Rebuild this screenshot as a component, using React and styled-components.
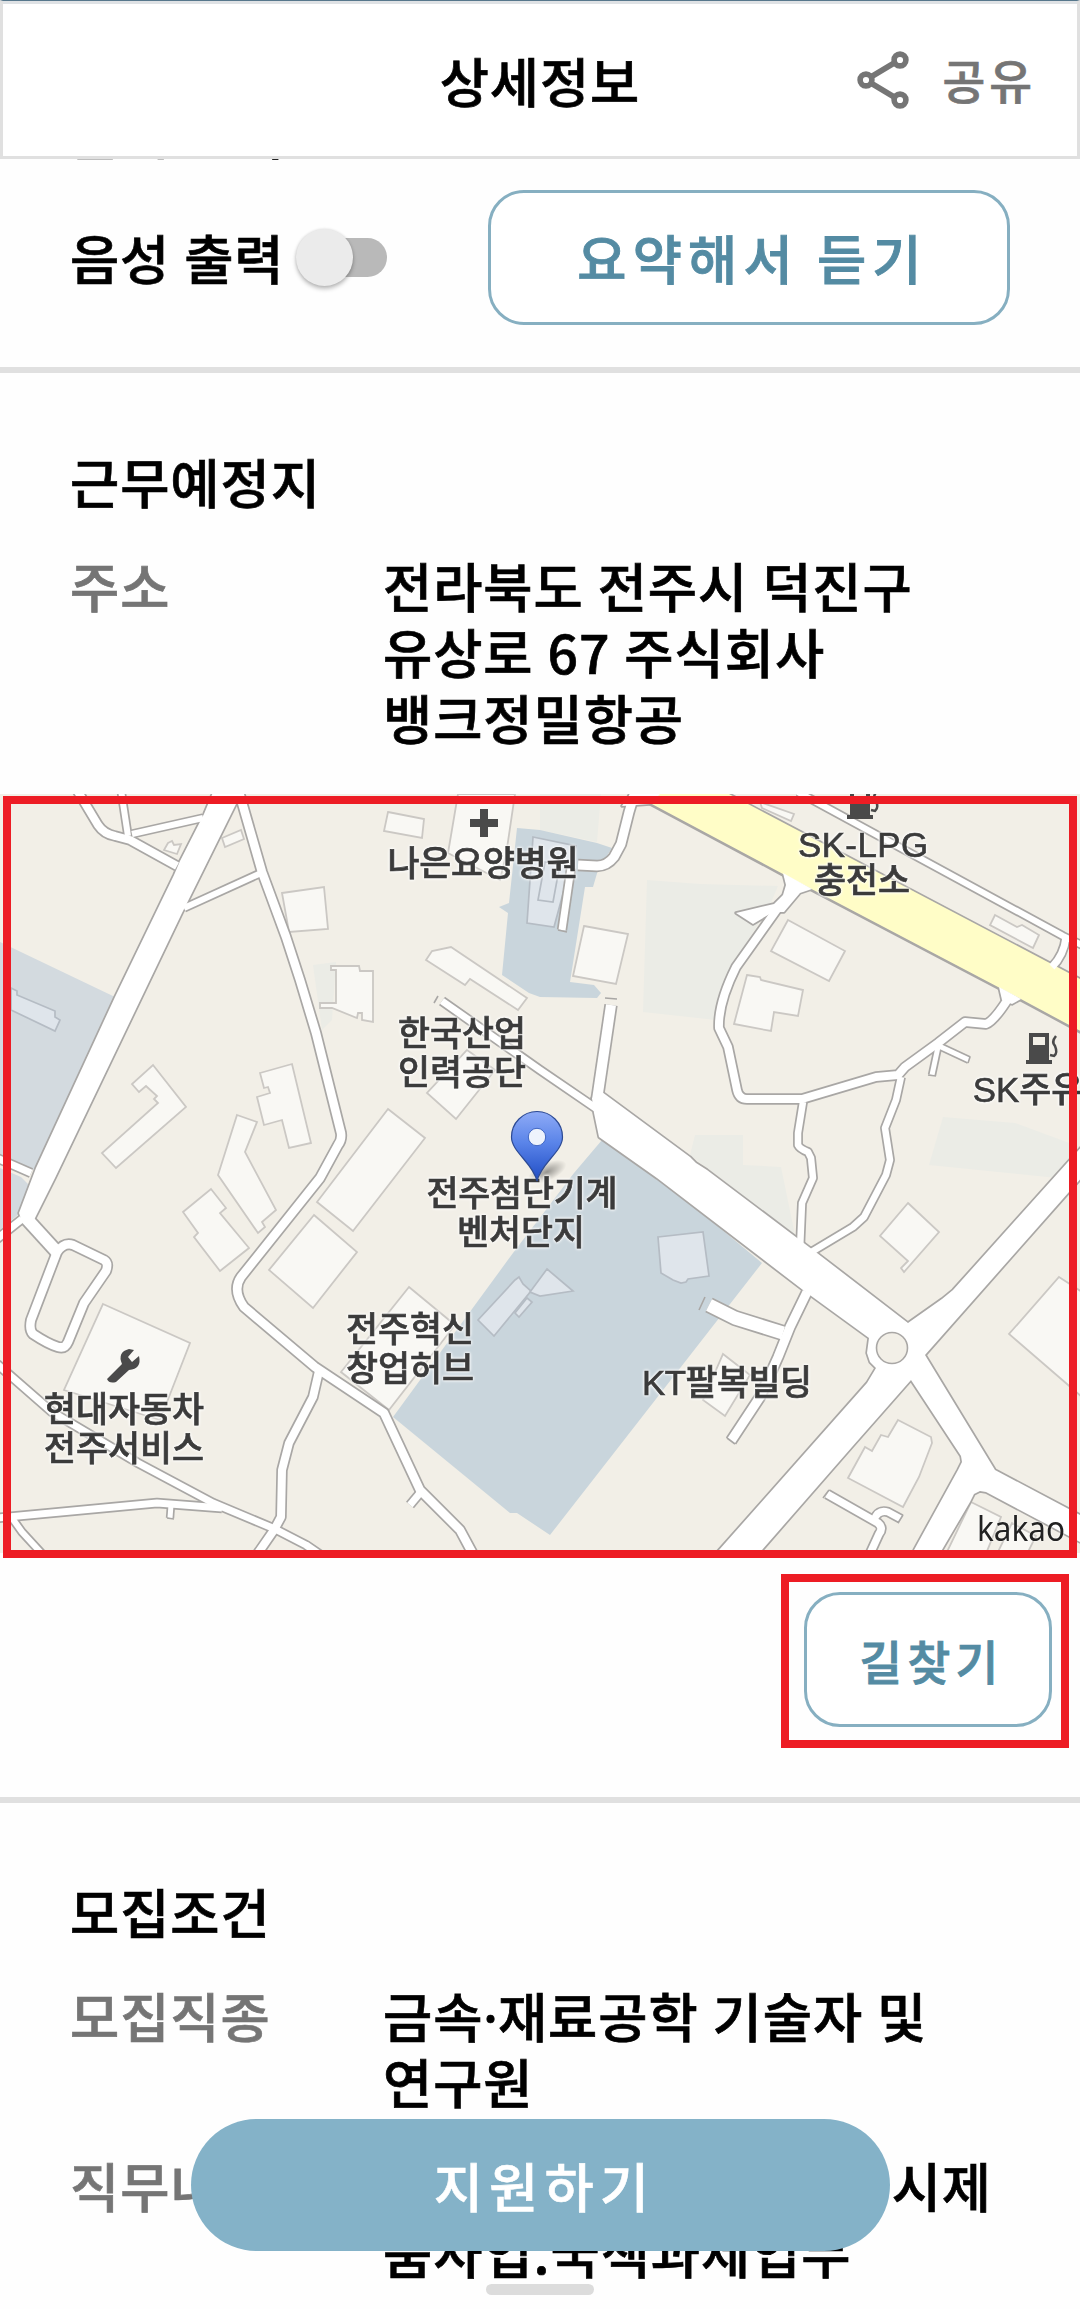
import React from "react";
import styled, { createGlobalStyle } from "styled-components";

const GlobalStyle = createGlobalStyle`
  * { box-sizing: border-box; }
  body {
    margin: 0;
    background: #fefefe;
    font-family: "Noto Sans CJK KR", "Noto Sans", sans-serif;
    font-weight: 500;
    color: #000;
    -webkit-text-stroke: 0.7px currentColor;
  }
  button { font-family: inherit; }
`;

const Page = styled.div`
  position: relative;
  width: 1080px;
  height: 2309px;
  overflow: hidden;
  background: #fefefe;
`;

const Header = styled.header`
  position: relative;
  z-index: 2;
  display: grid;
  grid-template-columns: 1fr auto 1fr;
  align-items: center;
  height: 159px;
  padding: 0 41px 0 41px;
  background: #fff;
  border: 3px solid #e0e0e0;
  border-top: 1px solid #57778c;
  box-shadow: inset 0 3px 0 #dfe2e5;
`;

const Title = styled.h1`
  grid-column: 2;
  margin: 2px 0 0;
  font-size: 53.5px;
  letter-spacing: 0.9px;
  line-height: 66px;
  font-weight: 500;
`;

const Share = styled.button`
  justify-self: end;
  display: flex;
  align-items: center;
  gap: 32px;
  margin-top: 2px;
  padding: 0;
  border: 0;
  background: none;
  color: #757575;
  font-size: 46.5px;
  line-height: 60px;
  letter-spacing: 4px;
  font-weight: 500;
`;

const ShareLabel = styled.span`
  margin-top: -1px;
`;

const Peek = styled.div`
  height: 66px;
  margin: -60px 0 -6px;
  padding-left: 70px;
  font-size: 53.5px;
  letter-spacing: 0.9px;
  word-spacing: 2px;
  line-height: 66px;
`;

const VoiceRow = styled.div`
  display: flex;
  align-items: center;
  height: 208px;
  padding: 0 70px;
`;

const VoiceLabel = styled.span`
  width: 214px;
  margin-top: -12px;
  font-size: 53.5px;
  letter-spacing: 0.9px;
  word-spacing: 1px;
  line-height: 66px;
  white-space: nowrap;
`;

const Track = styled.div`
  display: flex;
  align-items: center;
  width: 89px;
  height: 39px;
  margin: -12px 0 0 14px;
  border-radius: 20px;
  background: #b9b9b9;
`;

const Thumb = styled.div`
  flex: none;
  width: 57px;
  height: 57px;
  margin-left: -2px;
  border-radius: 50%;
  background: #ebebeb;
  box-shadow: 0 3px 4px rgba(0, 0, 0, 0.25), 0 0 3px rgba(0, 0, 0, 0.12);
`;

const OutlineButton = styled.button`
  width: ${(p) => p.$width}px;
  height: 135px;
  margin: ${(p) => p.$margin || 0};
  padding: 0 0 1px 7px;
  border: 3px solid #86afc1;
  border-radius: 36px;
  background: #fff;
  color: #548ba3;
  font-size: ${(p) => p.$size}px;
  letter-spacing: 0.115em;
  font-weight: 500;
  -webkit-text-stroke: 0.9px currentColor;
`;

const Divider = styled.div`
  height: 6px;
  background: #e0e0e0;
`;

const Section = styled.section`
  display: flex;
  flex-direction: column;
  gap: 38px;
  padding: 75px 70px 0;
  font-size: 53.5px;
  letter-spacing: 0.95px;
  line-height: 66px;
`;

const SectionTitle = styled.h2`
  margin: 0;
  font-size: inherit;
  font-weight: 500;
`;

const Row = styled.div`
  display: grid;
  grid-template-columns: 313px 1fr;
`;

const Label = styled.div`
  color: #757575;
  white-space: nowrap;
`;

const Value = styled.div`
  word-spacing: ${(p) => p.$wordSpacing || 0}px;
  white-space: nowrap;
`;

const MiddleDot = styled.span`
  font-family: "Noto Sans", sans-serif;
  letter-spacing: 0;
  line-height: 0;
`;

const MapBox = styled.div`
  position: relative;
  height: 759px;
  margin-top: 44px;
`;

const MapSvg = styled.svg`
  display: block;
  width: 1080px;
  height: 759px;
`;

const MapFrame = styled.div`
  position: absolute;
  inset: 2px 3px -5px 3px;
  border: 8px solid #ed1c24;
`;

const Actions = styled.div`
  display: flex;
  justify-content: flex-end;
  height: 244px;
  padding: 21px 11px 0 0;
`;

const ActionFrame = styled.div`
  height: 174px;
  padding: 10px 9px 13px 15px;
  border: 8px solid #ed1c24;
`;

const ApplyButton = styled.button`
  position: absolute;
  left: 191px;
  top: 2119px;
  width: 699px;
  height: 132px;
  padding: 0 0 1px 8px;
  border: 0;
  border-radius: 66px;
  background: #84b2c8;
  color: #fff;
  font-size: 53.5px;
  letter-spacing: 0.115em;
  font-weight: 500;
  -webkit-text-stroke: 0.6px currentColor;
`;

const HomeHandle = styled.div`
  position: absolute;
  left: 486px;
  top: 2284px;
  width: 108px;
  height: 11px;
  border-radius: 6px;
  background: #dcdcdc;
`;

const Place = styled.text`
  font-family: "Liberation Sans", "Noto Sans CJK KR", sans-serif;
  font-size: 34.8px;
  font-weight: 500;
  text-anchor: middle;
  fill: #3b3b3b;
  stroke: #3b3b3b;
  stroke-width: 0.7px;
  -webkit-text-stroke: 0;
  filter: drop-shadow(0 0 1px #fff) drop-shadow(0 0 1.5px #fff);
`;

const Brand = styled.text`
  font-family: "Noto Sans", sans-serif;
  font-weight: 400;
  font-size: 35px;
  fill: #222;
  -webkit-text-stroke: 0;
  filter: drop-shadow(0 0 1px #fff);
`;

const ShareIcon = () => (
  <svg width="54" height="58" viewBox="0 0 54 58" fill="none" stroke="#757575" strokeWidth="5.6">
    <path d="M14 26.5 L39 11.5 M14 31.5 L39 46.5" />
    <circle cx="10" cy="29" r="5.9" />
    <circle cx="44" cy="9" r="5.9" />
    <circle cx="44" cy="49" r="5.9" />
  </svg>
);

const greens = [
  "540,794 601,794 597,842 540,830",
  "647,880 700,884 778,886 770,905 736,960 718,1000 716,1020 643,1012",
  "695,1135 743,1135 743,1165 781,1167 795,1235 690,1155",
  "943,1117 1015,1123 1080,1147 1057,1178 929,1165",
  "313,965 336,962 332,1020 322,1030",
];

const blues = [
  "517,828 540,830 597,843 612,848 598,870 593,887 585,887 570,982 594,985 601,993 597,998 540,997 529,993 502,975 508,913 499,907 509,903",
  "602,1140 660,1178 762,1263 550,1535 517,1513 510,1513 393,1417 513,1253 574,1173",
];

const paleBlues = [
  "0,942 115,997 34,1170 0,1155",
  "0,1168 21,1177 29,1185 20,1213 0,1230",
];

const buildings = [
  "388,812 424,819 422,838 384,831",
  "458,794 515,794 506,855 500,880 448,853",
  "282,893 324,887 328,929 289,932",
  "331,966 359,966 360,971 373,971 373,1022 362,1020 362,1013 358,1013 357,1018 332,1008 320,1008 320,1003 336,1003 336,970 331,970",
  "426,960 432,951 451,947 527,998 518,1010 470,979 465,985",
  "153,1065 186,1107 116,1168 102,1153 158,1103 154,1099 157,1096 146,1086 139,1092 132,1084",
  "260,1073 292,1064 311,1143 289,1148 282,1120 264,1125 257,1097 270,1093 268,1087 264,1088",
  "237,1115 257,1122 245,1152 276,1210 262,1222 265,1227 258,1233 218,1175",
  "211,1189 226,1208 220,1213 249,1248 220,1271 194,1237 198,1233 183,1212",
  "388,1109 425,1138 353,1231 317,1202",
  "314,1215 357,1252 313,1308 269,1270",
  "409,1287 455,1325 389,1410 341,1372",
  "467,1050 495,1070 456,1119 427,1093",
  "222,838 241,830 244,839 225,847",
  "168,843 172,841 174,845 181,844 177,854 164,850",
  "103,1304 190,1343 160,1420 64,1390",
  "584,926 628,934 616,984 573,976",
  "788,920 845,951 829,981 771,951",
  "747,975 760,977 761,980 803,990 798,1016 774,1012 771,1031 734,1024",
  "995,915 1017,927 1022,925 1039,935 1033,948 990,925",
  "760,802 794,814 791,821 762,808",
  "908,1203 939,1232 904,1272 901,1268 908,1261 880,1236",
  "1059,1277 1082,1292 1082,1397 1009,1334",
  "898,1420 931,1437 932,1443 919,1477 903,1507 848,1478 865,1447 872,1451 881,1435 888,1437",
  "723,1354 750,1375 725,1416 703,1400",
  "971,1502 1001,1517 985,1556 945,1556",
  "1012,1523 1036,1536 1026,1556 996,1556",
];

const coolBuildings = [
  "11,988 17,991 17,995 55,1011 55,1017 60,1020 55,1031 11,1010",
  "533,837 576,846 564,890 554,927 527,923",
  "545,862 560,864 553,902 538,900",
  "658,1237 703,1232 709,1276 688,1279 686,1282 681,1283 673,1280 661,1273",
  "515,1280 519,1277 523,1284 531,1291 494,1336 478,1320",
  "547,1269 573,1291 540,1296 530,1292",
  "527,1298 532,1302 519,1317 515,1313",
];

const lanes = [
  ["M239 792 L262 872 L286 937 L300 980 L316 1033 L341 1133 Q342 1140 338 1145 L320 1178 L241 1277 Q232 1290 244 1307 L315 1367 L384 1413 L420 1490 L460 1530 L474 1556", 8.5],
  ["M184 908 L261 873", 6],
  ["M203 818 L132 834", 6],
  ["M77 790 L98 825 Q104 834 115 836 L130 840 L177 866", 8],
  ["M121 790 L128 836", 6],
  ["M-3 1158 L31 1173", 7],
  ["M-3 1239 L22 1219", 7],
  ["M26 1218 L57 1252", 12],
  ["M57 1252 Q64 1242 73 1245 L104 1260 Q109 1263 106 1271 L84 1303 L68 1342 Q65 1349 58 1347 Q48 1344 33 1334 Q29 1330 31 1320 Z", 8.5],
  ["M-3 1364 L52 1412 L138 1463 L213 1503 L275 1529 L306 1545 L325 1558", 7],
  ["M-3 1518 L157 1503 L222 1508", 7],
  ["M171 1505 L170 1518", 5],
  ["M12 1518 L22 1532 L44 1556", 6],
  ["M319 1371 L313 1397 L289 1443 L282 1470 L281 1517 L274 1530 L256 1556", 8],
  ["M420 1493 L410 1505", 7],
  ["M442 1001 L540 1070 L597 1109", 7],
  ["M611 1005 L597 1100", 10],
  ["M791 893 L778 908 L736 967 Q718 1003 719 1028 L728 1047 L737 1090 Q739 1099 747 1099 L802 1099 L876 1077 L898 1075 L905 1067 L938 1043 L965 1022 L986 1024 Q994 1021 1008 999", 8],
  ["M803 1102 L798 1133 L798 1145 Q800 1149 808 1152 L811 1158 L813 1178 L802 1203 L800 1250", 6.5],
  ["M901 1077 L896 1100 L885 1128 L890 1160 L886 1175 L864 1217 L853 1227 L808 1254", 6.5],
  ["M938 1047 L932 1075", 5],
  ["M939 1046 L969 1060", 5],
  ["M807 1292 L790 1327 L778 1357 L760 1397 L731 1441", 9],
  ["M709 1305 L735 1318 L783 1333", 13],
  ["M827 1494 L878 1523 Q884 1528 879 1534 L868 1558", 7.5],
  ["M874 1520 Q878 1509 888 1512 L901 1519", 7],
  ["M635 792 L629 812 L621 844 L614 857 Q607 866 597 866 L578 865", 9],
  ["M571 868 L562 930", 7],
  ["M798 792 L1063 936 L1084 946", 6],
  ["M1066 937 Q1064 955 1052 967", 7],
];

const plazas = [
  "214,790 204,814 180,861 174,875 115,997 36,1168 19,1213 22,1222 34,1220 55,1178 182,913 188,901 236,804 244,790",
  "592,1098 594,1113 599,1137 657,1178 803,1290 869,1338 867,1353 870,1362 876,1368 867,1383 719,1550 710,1560 753,1560 762,1550 852,1447 911,1380 961,1456 962,1462 958,1470 914,1550 908,1560 936,1560 970,1502 974,1494 980,1491 986,1492 1084,1544 1084,1517 995,1470 925,1355 1069,1192 1084,1175 1084,1144 953,1290 942,1299 908,1323 817,1253 707,1170 696,1163 690,1157 602,1092",
  "783,873 786,885 783,895 774,904 736,913 753,924 773,912 784,912 800,893 812,889",
  "999,987 1002,1000 1012,1004 1021,999",
  "622,806 650,804 660,794 630,794",
];

const FuelPump = ({ x, y }) => (
  <g transform={`translate(${x} ${y})`}>
    <path d="M3 0 H23 V27 H26 V31 H0 V27 H3 Z M7 4 V12 H19 V4 Z" fill="#4a4a4a" fillRule="evenodd" />
    <path d="M30 3 Q25 9 29 13 Q32 20 28 23 L24 22" fill="none" stroke="#4a4a4a" strokeWidth="2.5" />
  </g>
);

const StreetMap = () => (
  <MapSvg viewBox="0 794 1080 759">
    <defs>
      <linearGradient id="pin" x1="0" y1="0" x2="0" y2="1">
        <stop offset="0" stopColor="#8fabf6" />
        <stop offset="0.45" stopColor="#5a84e9" />
        <stop offset="1" stopColor="#1f4cc4" />
      </linearGradient>
      <radialGradient id="pinShadow">
        <stop offset="0" stopColor="#000" stopOpacity="0.38" />
        <stop offset="1" stopColor="#000" stopOpacity="0" />
      </radialGradient>
    </defs>
    <rect y="790" width="1080" height="770" fill="#f2efe7" />
    <g fill="#ebece6">{greens.map((p) => <polygon key={p} points={p} />)}</g>
    <g fill="#c9d5dc">{blues.map((p) => <polygon key={p} points={p} />)}</g>
    <g fill="#d3dadf">{paleBlues.map((p) => <polygon key={p} points={p} />)}</g>
    <g fill="#f9f8f4" stroke="#cbc8c4" strokeWidth="1.8">
      {buildings.map((p) => <polygon key={p} points={p} />)}
    </g>
    <g fill="#dfe5eb" stroke="#b5bcc4" strokeWidth="1.7">
      {coolBuildings.map((p) => <polygon key={p} points={p} />)}
    </g>
    <g fill="none" stroke="#a9a7a5" strokeLinejoin="round">
      {lanes.map(([d, w]) => <path key={d} d={d} strokeWidth={w + 3.4} />)}
      {plazas.map((p) => <polygon key={p} points={p} strokeWidth="3.4" />)}
      <path d="M729 794 L1084 981 M635 794 L650 804 L783 875 L1019 999 L1084 1034" strokeWidth="3.2" />
    </g>
    <polygon points="635,792 650,803 783,874 1019,998 1084,1033 1084,981 729,794 725,790" fill="#fffdc7" />
    <g fill="none" stroke="#fff" strokeLinejoin="round" strokeLinecap="butt">
      {lanes.map(([d, w]) => <path key={d} d={d} strokeWidth={w} />)}
    </g>
    <g fill="#fff">{plazas.map((p) => <polygon key={p} points={p} />)}</g>
    <g stroke="#a9a7a5" strokeWidth="1.6" fill="none">
      <path d="M438 996 L434 1003 M605 998 L617 999 M705 1297 L699 1310 M727 1438 L735 1444 M829 1490 L823 1498 M903 1515 L898 1523 M558 930 L567 932 M928 1075 L936 1076 M970 1057 L968 1063 M167 1518 L174 1519" />
      <circle cx="892" cy="1348" r="15.5" fill="#f2efe7" />
    </g>

    <path d="M470 823 h28 M484 809 v28" stroke="#4a4a4a" strokeWidth="8" fill="none" />
    <FuelPump x={847} y={788} />
    <FuelPump x={1026} y={1033} />
    <path d="M107 1379 L122 1364 Q117 1352 129 1349 L134 1350 L128 1357 L132 1362 L139 1356 Q142 1369 129 1370 L116 1382 Q109 1384 107 1379 Z" fill="#4a4a4a" />

    <ellipse cx="547" cy="1172" rx="21" ry="9" fill="url(#pinShadow)" transform="rotate(-25 547 1172)" />
    <Place x="483" y="876" textLength="191">나은요양병원</Place>
    <Place x="462" y="1046">한국산업</Place>
    <Place x="462" y="1085">인력공단</Place>
    <Place x="410" y="1342">전주혁신</Place>
    <Place x="410" y="1381">창업허브</Place>
    <Place x="124" y="1422">현대자동차</Place>
    <Place x="124" y="1461">전주서비스</Place>
    <Place x="727" y="1395" textLength="170">KT팔복빌딩</Place>
    <Place x="863" y="857" textLength="130">SK-LPG</Place>
    <Place x="862" y="893">충전소</Place>
    <Place x="1044" y="1102">SK주유소</Place>
    <Place x="522" y="1206" textLength="191">전주첨단기계</Place>
    <Place x="521" y="1245">벤처단지</Place>

    <path d="M537 1181 C533 1163 511.5 1152 511.5 1137 A25.5 25.5 0 0 1 562.5 1137 C562.5 1152 541 1163 537 1181 Z" fill="url(#pin)" stroke="#2c4a94" strokeWidth="1.2" />
    <circle cx="537" cy="1137" r="8.7" fill="#eef3fc" stroke="#3f66c4" strokeWidth="1" />
    <Brand x="977" y="1541" textLength="88" lengthAdjust="spacingAndGlyphs">kakao</Brand>
  </MapSvg>
);

export default function App() {
  return (
    <Page>
      <GlobalStyle />
      <Header>
        <Title>상세정보</Title>
        <Share>
          <ShareIcon />
          <ShareLabel>공유</ShareLabel>
        </Share>
      </Header>
      <Peek>글씨 크기</Peek>
      <VoiceRow>
        <VoiceLabel>음성 출력</VoiceLabel>
        <Track>
          <Thumb />
        </Track>
        <OutlineButton $width={522} $size={53.5} $margin="-12px 0 0 auto">요약해서 듣기</OutlineButton>
      </VoiceRow>
      <Divider />
      <Section>
        <SectionTitle>근무예정지</SectionTitle>
        <Row>
          <Label>주소</Label>
          <Value $wordSpacing={1}>
            전라북도 전주시 덕진구<br />유상로 67 주식회사<br />뱅크정밀항공
          </Value>
        </Row>
      </Section>
      <MapBox>
        <StreetMap />
        <MapFrame />
      </MapBox>
      <Actions>
        <ActionFrame>
          <OutlineButton $width={248} $size={46.5}>길찾기</OutlineButton>
        </ActionFrame>
      </Actions>
      <Divider />
      <Section>
        <SectionTitle>모집조건</SectionTitle>
        <Row>
          <Label>모집직종</Label>
          <Value $wordSpacing={1}>
            금속<MiddleDot>·</MiddleDot>재료공학 기술자 및<br />연구원
          </Value>
        </Row>
        <Row>
          <Label>직무내용</Label>
          <Value $wordSpacing={-6}>
            정밀항공부품제작개발 시제<br />품사업.국책과제업무
          </Value>
        </Row>
      </Section>
      <ApplyButton>지원하기</ApplyButton>
      <HomeHandle />
    </Page>
  );
}
